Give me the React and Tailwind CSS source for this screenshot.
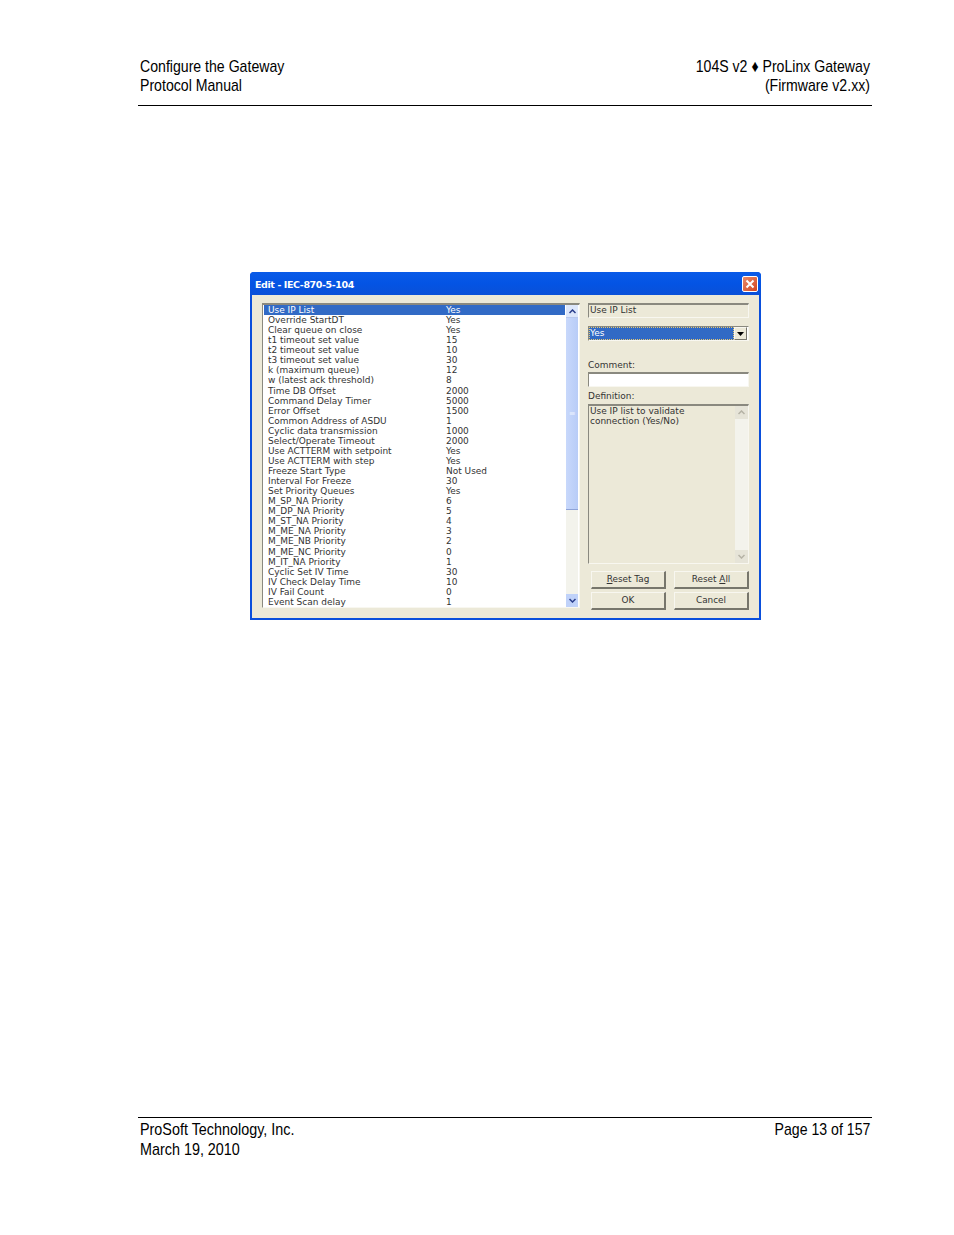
const rows = [
  ["Use IP List", "Yes"], ["Override StartDT", "Yes"], ["Clear queue on close", "Yes"],
  ["t1 timeout set value", "15"], ["t2 timeout set value", "10"], ["t3 timeout set value", "30"],
  ["k (maximum queue)", "12"], ["w (latest ack threshold)", "8"], ["Time DB Offset", "2000"],
  ["Command Delay Timer", "5000"], ["Error Offset", "1500"], ["Common Address of ASDU", "1"],
  ["Cyclic data transmission", "1000"], ["Select/Operate Timeout", "2000"],
  ["Use ACTTERM with setpoint", "Yes"], ["Use ACTTERM with step", "Yes"], ["Freeze Start Type", "Not Used"],
  ["Interval For Freeze", "30"], ["Set Priority Queues", "Yes"], ["M_SP_NA Priority", "6"],
  ["M_DP_NA Priority", "5"], ["M_ST_NA Priority", "4"], ["M_ME_NA Priority", "3"],
  ["M_ME_NB Priority", "2"], ["M_ME_NC Priority", "0"], ["M_IT_NA Priority", "1"],
  ["Cyclic Set IV Time", "30"], ["IV Check Delay Time", "10"], ["IV Fail Count", "0"], ["Event Scan delay", "1"],
];

function Chevron({ dir = "up", color = "#2b3f8c" }) {
  return (
    <svg width="7" height="5" viewBox="0 0 7 5">
      <path d={dir === "up" ? "M0.5 4L3.5 1L6.5 4" : "M0.5 1L3.5 4L6.5 1"} fill="none" stroke={color} strokeWidth="1.5" />
    </svg>
  );
}

function Btn({ children }) {
  return (
    <div className="w-[75px] h-[18px] flex items-center justify-center text-[8.9px] text-[#333] bg-[#ece9d8] border border-[#f8f7f0] border-r-[#77766c] border-b-[#77766c] border-b-2 border-r-2">
      {children}
    </div>
  );
}

export default function App() {
  return (
    <div className="w-[954px] h-[1235px] bg-white flex flex-col font-['Liberation_Sans',sans-serif] text-black">
      <header className="mt-[57px] ml-[138px] w-[734px] h-[49px] border-b border-black px-[2px] flex justify-between text-[17px] leading-[19px]">
        <div className="origin-left scale-x-[0.83] whitespace-nowrap"><div>Configure the Gateway</div><div>Protocol Manual</div></div>
        <div className="origin-right scale-x-[0.83] whitespace-nowrap text-right"><div>104S v2 ♦ ProLinx Gateway</div><div>(Firmware v2.xx)</div></div>
      </header>

      <div className="ml-[250px] mt-[166px] w-[511px] h-[348px] bg-[#0a4fdc] rounded-t-[4px] px-[2px] pb-[2px] flex flex-col font-['DejaVu_Sans',sans-serif]">
        <div className="h-[23px] -mx-[2px] rounded-t-[4px] bg-gradient-to-b from-[#0a5be8] via-[#0454e4] to-[#0a50d8] flex items-center justify-between pl-[5px] pr-[3px] shrink-0">
          <span className="text-white text-[9.5px] font-bold tracking-[-0.4px] pt-[3px]">Edit - IEC-870-5-104</span>
          <div className="w-[16px] h-[16px] rounded-[2px] bg-gradient-to-br from-[#e98a68] to-[#d2431c] border border-white flex items-center justify-center">
            <svg width="10" height="10" viewBox="0 0 10 10"><path d="M1.5 1.5L8.5 8.5M8.5 1.5L1.5 8.5" stroke="#fff" strokeWidth="2" /></svg>
          </div>
        </div>
        <div className="flex-1 bg-[#ece9d8] flex pl-[10px] pt-[8px] text-[8.97px] text-[#333]">
          <div className="w-[318px] h-[305px] bg-white border border-[#8a897f] border-r-[#f8f7f0] border-b-[#f8f7f0] border-t-2 flex">
            <div className="flex-1 pl-[1px] pr-[1px]">
              {rows.map(([a, b], i) => (
                <div key={a} className={`h-[10.07px] leading-[10px] flex whitespace-nowrap pl-[4px] ${i === 0 ? "bg-[#316ac5] text-white" : ""}`}>
                  <span className="w-[178px]">{a}</span><span>{b}</span>
                </div>
              ))}
            </div>
            <div className="w-[12px] mr-[1px] flex flex-col bg-[#f3f3ec]">
              <div className="h-[13px] bg-[#dde7fb] border-b border-[#b8c8ee] flex items-center justify-center shrink-0"><Chevron /></div>
              <div className="h-[192px] bg-gradient-to-r from-[#c8d8fb] to-[#b8ccf7] border-b border-[#8ea3d8] flex items-center justify-center text-[8px] text-[#eef3ff]">≡</div>
              <div className="flex-1" />
              <div className="h-[13px] bg-[#c0d2f9] flex items-center justify-center shrink-0"><Chevron dir="down" /></div>
            </div>
          </div>
          <div className="ml-[8px] w-[161px] flex flex-col">
            <div className="h-[15px] bg-[#ece9d8] border border-[#8a897f] border-r-[#f8f7f0] border-b-[#f8f7f0] border-t-2 leading-[11px] pl-[1px]">Use IP List</div>
            <div className="mt-[8px] h-[15px] bg-white border border-[#8a897f] border-r-[#f8f7f0] border-b-[#f8f7f0] flex items-center pr-[1px]">
              <div className="flex-1 h-full bg-[#316ac5] border border-dotted border-[#e8c870] text-white leading-[11px]">Yes</div>
              <div className="w-[13px] h-full bg-[#ece9d8] border border-[#f8f7f0] border-r-[#77766c] border-b-[#77766c] flex items-center justify-center">
                <svg width="7" height="4" viewBox="0 0 7 4"><path d="M0 0H7L3.5 4Z" fill="#000" /></svg>
              </div>
            </div>
            <div className="mt-[18px] h-[12px] leading-[12px]">Comment:</div>
            <div className="mt-[1px] h-[15px] bg-white border border-[#8a897f] border-r-[#f8f7f0] border-b-[#f8f7f0] border-t-2" />
            <div className="mt-[3px] h-[12px] leading-[12px]">Definition:</div>
            <div className="mt-[2px] h-[160px] bg-[#ece9d8] border border-[#8a897f] border-r-[#f8f7f0] border-b-[#f8f7f0] border-t-2 flex">
              <div className="flex-1 pl-[1px] leading-[10px]">Use IP list to validate<br />connection (Yes/No)</div>
              <div className="w-[13px] flex flex-col bg-[#f3f3ec]">
                <div className="h-[13px] bg-[#e6e4d8] flex items-center justify-center shrink-0"><Chevron color="#b5b3a6" /></div>
                <div className="flex-1" />
                <div className="h-[13px] bg-[#e6e4d8] flex items-center justify-center shrink-0"><Chevron dir="down" color="#b5b3a6" /></div>
              </div>
            </div>
            <div className="mt-[7px] ml-[3px] flex gap-[8px]">
              <Btn><span><u>R</u>eset Tag</span></Btn>
              <Btn><span>Reset <u>A</u>ll</span></Btn>
            </div>
            <div className="mt-[3px] ml-[3px] flex gap-[8px]">
              <Btn>OK</Btn>
              <Btn>Cancel</Btn>
            </div>
          </div>
        </div>
      </div>

      <footer className="mt-[497px] ml-[138px] w-[734px] border-t border-black px-[2px] pt-[2px] flex justify-between text-[17px] leading-[19.5px]">
        <div className="origin-left scale-x-[0.845] whitespace-nowrap"><div>ProSoft Technology, Inc.</div><div>March 19, 2010</div></div>
        <div className="origin-right scale-x-[0.83] whitespace-nowrap">Page 13 of 157</div>
      </footer>
    </div>
  );
}
